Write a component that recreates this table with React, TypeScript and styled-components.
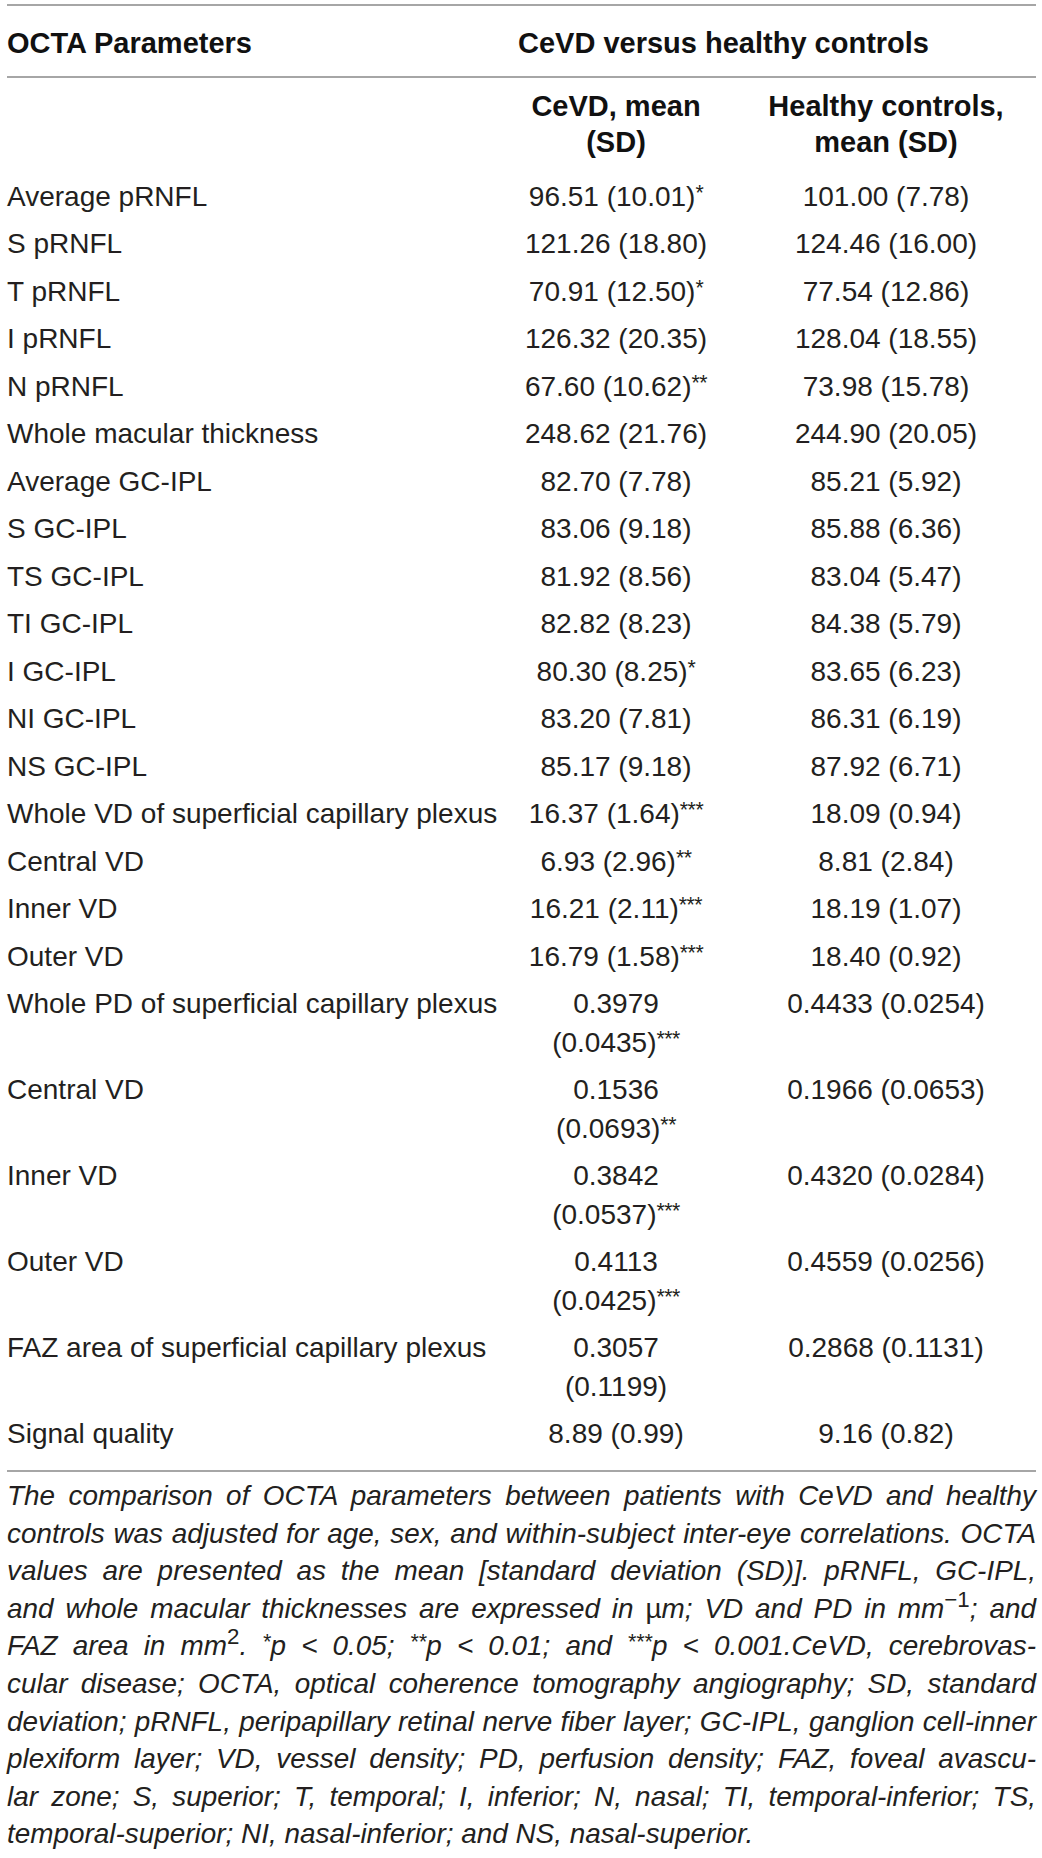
import React from 'react'
import styled, { createGlobalStyle } from 'styled-components'

const RULE = '#a6a6a6'
const INK = '#231f20'

const GlobalStyle = createGlobalStyle`
  html, body {
    margin: 0;
    padding: 0;
    background: #ffffff;
  }
  body {
    font-family: 'Liberation Sans', Arial, Helvetica, sans-serif;
    color: ${INK};
  }
`

const Page = styled.div`
  box-sizing: border-box;
  width: 1042px;
  padding: 4px 6px 0 7px;
`

const Table = styled.div`
  border-top: 2px solid ${RULE};
  border-bottom: 2px solid ${RULE};
`

const Row = styled.div`
  display: grid;
  grid-template-columns: 489px 240px 300px;
  align-items: start;
`

const TitleRow = styled(Row)`
  padding: 18px 0 14px;
  border-bottom: 2px solid ${RULE};
`

const SubTitleRow = styled(Row)`
  padding: 10px 0 13px;
`

const HeadCell = styled.div<{ align?: 'left' | 'center'; span?: boolean; indent?: number }>`
  font-weight: 700;
  font-size: 29px;
  line-height: 38px;
  color: #111111;
  text-align: ${({ align }) => align || 'left'};
  grid-column: ${({ span }) => (span ? '2 / 4' : 'auto')};
  padding-left: ${({ indent }) => indent || 0}px;
`

const SubHeadCell = styled(HeadCell)`
  line-height: 36px;
`

const Body = styled.div`
  padding-bottom: 12px;
`

const DataRow = styled(Row)`
  padding: 4.5px 0;
`

const Label = styled.div`
  font-size: 28px;
  line-height: 38.5px;
  white-space: nowrap;
`

const Value = styled.div`
  font-size: 28px;
  line-height: 38.5px;
  text-align: center;
  white-space: nowrap;
`

const Stars = styled.span`
  font-size: 0.76em;
  line-height: 0;
  vertical-align: 0.3em;
  letter-spacing: -0.5px;
`

const Caption = styled.div`
  margin-top: 5px;
  font-size: 27.9px;
  line-height: 37.6px;
  font-style: italic;
`

const CaptionLine = styled.div<{ last?: boolean }>`
  white-space: nowrap;
  text-align: ${({ last }) => (last ? 'left' : 'justify')};
  text-align-last: ${({ last }) => (last ? 'left' : 'justify')};
`

const Sup = styled.sup`
  font-style: normal;
  font-size: 0.8em;
  line-height: 0;
  vertical-align: 0.5em;
`

const StarSup = styled.sup`
  font-size: 0.76em;
  line-height: 0;
  vertical-align: 0.3em;
`

const Upright = styled.span`
  font-style: normal;
`

interface Measure {
  mean: string
  sd: string
  stars?: string
  wrap?: boolean
}

interface Param {
  name: string
  cevd: Measure
  healthy: string
}

const params: Param[] = [
  { name: 'Average pRNFL', cevd: { mean: '96.51', sd: '(10.01)', stars: '*' }, healthy: '101.00 (7.78)' },
  { name: 'S pRNFL', cevd: { mean: '121.26', sd: '(18.80)' }, healthy: '124.46 (16.00)' },
  { name: 'T pRNFL', cevd: { mean: '70.91', sd: '(12.50)', stars: '*' }, healthy: '77.54 (12.86)' },
  { name: 'I pRNFL', cevd: { mean: '126.32', sd: '(20.35)' }, healthy: '128.04 (18.55)' },
  { name: 'N pRNFL', cevd: { mean: '67.60', sd: '(10.62)', stars: '**' }, healthy: '73.98 (15.78)' },
  { name: 'Whole macular thickness', cevd: { mean: '248.62', sd: '(21.76)' }, healthy: '244.90 (20.05)' },
  { name: 'Average GC-IPL', cevd: { mean: '82.70', sd: '(7.78)' }, healthy: '85.21 (5.92)' },
  { name: 'S GC-IPL', cevd: { mean: '83.06', sd: '(9.18)' }, healthy: '85.88 (6.36)' },
  { name: 'TS GC-IPL', cevd: { mean: '81.92', sd: '(8.56)' }, healthy: '83.04 (5.47)' },
  { name: 'TI GC-IPL', cevd: { mean: '82.82', sd: '(8.23)' }, healthy: '84.38 (5.79)' },
  { name: 'I GC-IPL', cevd: { mean: '80.30', sd: '(8.25)', stars: '*' }, healthy: '83.65 (6.23)' },
  { name: 'NI GC-IPL', cevd: { mean: '83.20', sd: '(7.81)' }, healthy: '86.31 (6.19)' },
  { name: 'NS GC-IPL', cevd: { mean: '85.17', sd: '(9.18)' }, healthy: '87.92 (6.71)' },
  { name: 'Whole VD of superficial capillary plexus', cevd: { mean: '16.37', sd: '(1.64)', stars: '***' }, healthy: '18.09 (0.94)' },
  { name: 'Central VD', cevd: { mean: '6.93', sd: '(2.96)', stars: '**' }, healthy: '8.81 (2.84)' },
  { name: 'Inner VD', cevd: { mean: '16.21', sd: '(2.11)', stars: '***' }, healthy: '18.19 (1.07)' },
  { name: 'Outer VD', cevd: { mean: '16.79', sd: '(1.58)', stars: '***' }, healthy: '18.40 (0.92)' },
  { name: 'Whole PD of superficial capillary plexus', cevd: { mean: '0.3979', sd: '(0.0435)', stars: '***', wrap: true }, healthy: '0.4433 (0.0254)' },
  { name: 'Central VD', cevd: { mean: '0.1536', sd: '(0.0693)', stars: '**', wrap: true }, healthy: '0.1966 (0.0653)' },
  { name: 'Inner VD', cevd: { mean: '0.3842', sd: '(0.0537)', stars: '***', wrap: true }, healthy: '0.4320 (0.0284)' },
  { name: 'Outer VD', cevd: { mean: '0.4113', sd: '(0.0425)', stars: '***', wrap: true }, healthy: '0.4559 (0.0256)' },
  { name: 'FAZ area of superficial capillary plexus', cevd: { mean: '0.3057', sd: '(0.1199)', wrap: true }, healthy: '0.2868 (0.1131)' },
  { name: 'Signal quality', cevd: { mean: '8.89', sd: '(0.99)' }, healthy: '9.16 (0.82)' },
]

function MeasureCell({ m }: { m: Measure }) {
  return (
    <Value>
      {m.mean}
      {m.wrap ? <br /> : ' '}
      {m.sd}
      {m.stars && <Stars>{m.stars}</Stars>}
    </Value>
  )
}

export default function App() {
  return (
    <Page>
      <GlobalStyle />
      <Table>
        <TitleRow>
          <HeadCell>OCTA Parameters</HeadCell>
          <HeadCell span indent={22}>
            CeVD versus healthy controls
          </HeadCell>
        </TitleRow>
        <SubTitleRow>
          <SubHeadCell />
          <SubHeadCell align="center">
            CeVD, mean
            <br />
            (SD)
          </SubHeadCell>
          <SubHeadCell align="center">
            Healthy controls,
            <br />
            mean (SD)
          </SubHeadCell>
        </SubTitleRow>
        <Body>
          {params.map((p, i) => (
            <DataRow key={i}>
              <Label>{p.name}</Label>
              <MeasureCell m={p.cevd} />
              <Value>{p.healthy}</Value>
            </DataRow>
          ))}
        </Body>
      </Table>
      <Caption>
        <CaptionLine>The comparison of OCTA parameters between patients with CeVD and healthy</CaptionLine>
        <CaptionLine>controls was adjusted for age, sex, and within-subject inter-eye correlations. OCTA</CaptionLine>
        <CaptionLine>values are presented as the mean [standard deviation (SD)]. pRNFL, GC-IPL,</CaptionLine>
        <CaptionLine>
          and whole macular thicknesses are expressed in <Upright>µ</Upright>m; VD and PD in mm<Sup>−1</Sup>; and
        </CaptionLine>
        <CaptionLine>
          FAZ area in mm<Sup>2</Sup>. <StarSup>*</StarSup>p &lt; 0.05; <StarSup>**</StarSup>p &lt; 0.01; and{' '}
          <StarSup>***</StarSup>p &lt; 0.001.CeVD, cerebrovas-
        </CaptionLine>
        <CaptionLine>cular disease; OCTA, optical coherence tomography angiography; SD, standard</CaptionLine>
        <CaptionLine>deviation; pRNFL, peripapillary retinal nerve fiber layer; GC-IPL, ganglion cell-inner</CaptionLine>
        <CaptionLine>plexiform layer; VD, vessel density; PD, perfusion density; FAZ, foveal avascu-</CaptionLine>
        <CaptionLine>lar zone; S, superior; T, temporal; I, inferior; N, nasal; TI, temporal-inferior; TS,</CaptionLine>
        <CaptionLine last>temporal-superior; NI, nasal-inferior; and NS, nasal-superior.</CaptionLine>
      </Caption>
    </Page>
  )
}
